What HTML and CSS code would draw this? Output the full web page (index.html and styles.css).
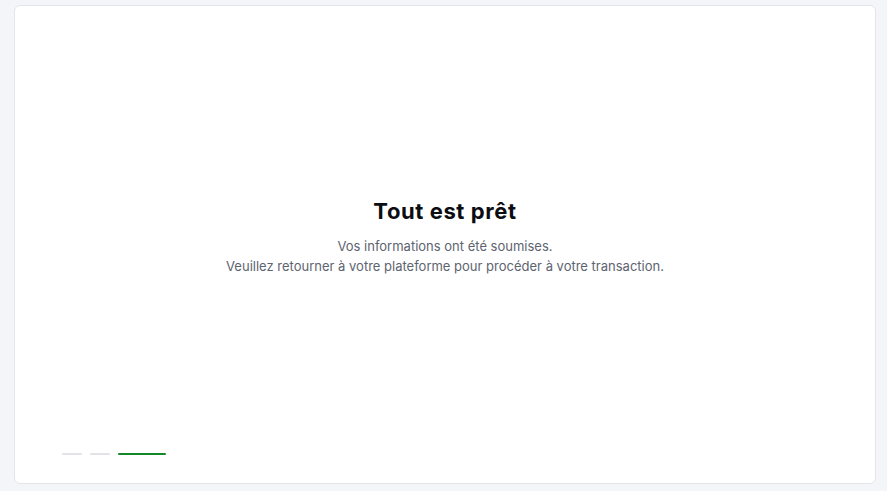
FILE: index.html
```html
<!DOCTYPE html>
<html lang="fr">
<head>
  <meta charset="UTF-8">
  <meta name="viewport" content="width=device-width, initial-scale=1.0">
  <title>Tout est prêt</title>
  <link rel="stylesheet" href="styles.css">
</head>
<body>
  <main class="card">
    <section class="done">
      <h1>Tout est prêt</h1>
      <p>Vos informations ont été soumises.<br>Veuillez retourner à votre plateforme pour procéder à votre transaction.</p>
    </section>
    <div class="steps">
      <span class="step"></span>
      <span class="step"></span>
      <span class="step active"></span>
    </div>
  </main>
</body>
</html>
```

FILE: styles.css
```css
html, body {
  height: 100%;
}
body {
  margin: 0;
  padding: 5px 11px 7px 14px;
  box-sizing: border-box;
  background: #f4f5f9;
  font-family: Inter, 'Open Sans', sans-serif;
  color: #0b0d12;
}
.card {
  height: 100%;
  box-sizing: border-box;
  background: #fff;
  border: 1px solid #e3e5ea;
  border-radius: 6px;
  display: flex;
  flex-direction: column;
  padding: 0 47px 28px;
}
.done {
  flex: 1;
  display: flex;
  flex-direction: column;
  align-items: center;
  justify-content: center;
  text-align: center;
  padding-top: 14px;
}
h1 {
  margin: 0 0 11px;
  font-size: 22px;
  line-height: 28px;
  font-weight: 700;
  letter-spacing: 0.6px;
}
p {
  margin: 0;
  font-size: 13px;
  line-height: 20px;
  color: #5d6470;
}
.steps {
  display: flex;
  gap: 8px;
}
.step {
  width: 20px;
  height: 2px;
  border-radius: 1px;
  background: #e2e3e6;
}
.step.active {
  width: 48px;
  background: #15872b;
}
```
